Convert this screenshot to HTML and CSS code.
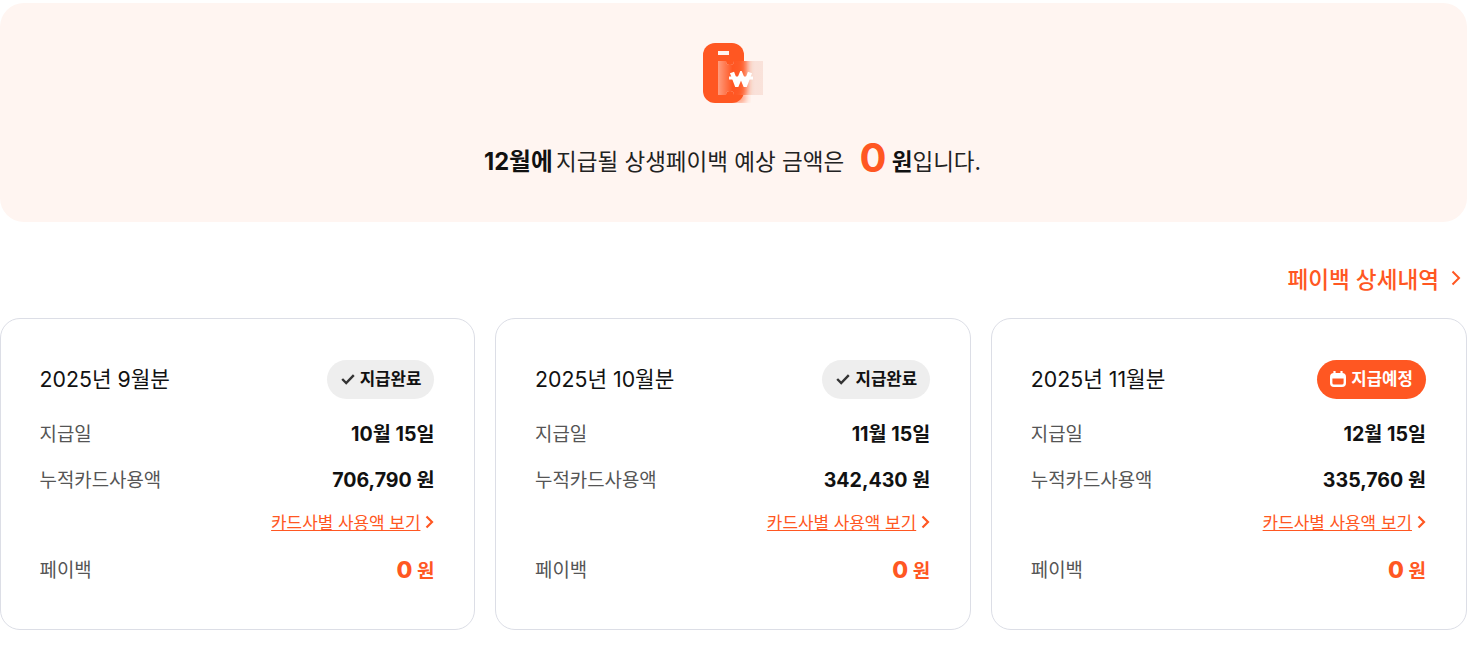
FILE: index.html
```html
<!DOCTYPE html>
<html lang="ko">
<head>
<meta charset="utf-8">
<title>페이백</title>
<link rel="stylesheet" href="styles.css">
</head>
<body>
<main class="page">
  <section class="hero">
    <svg class="hero-icon" width="60" height="60" viewBox="0 0 60 60" aria-hidden="true">
      <defs>
        <clipPath id="tk"><path d="M15 18h8a4 4 0 0 0 8 0h29v34H31a4 4 0 0 0-8 0h-8z"/></clipPath>
        <linearGradient id="sheen" x1="0" y1="0" x2="1" y2="0">
          <stop offset="0" stop-color="#fff" stop-opacity=".42"/>
          <stop offset=".32" stop-color="#fff" stop-opacity="0"/>
          <stop offset="1" stop-color="#fff" stop-opacity=".12"/>
        </linearGradient>
        <filter id="bl" x="-30%" y="-30%" width="160%" height="160%"><feGaussianBlur stdDeviation="3"/></filter>
        <filter id="soft" x="-10%" y="-10%" width="120%" height="120%"><feGaussianBlur stdDeviation=".35"/></filter>
      </defs>
      <rect x="28" y="48" width="15" height="13" rx="5" fill="#ff5722" opacity=".55" filter="url(#bl)"/>
      <rect x="0" y="0" width="41" height="60" rx="12" fill="#ff5722"/>
      <rect x="15" y="8" width="11" height="4" fill="#fff3ee"/>
      <path d="M15 18h8a4 4 0 0 0 8 0h29v34H31a4 4 0 0 0-8 0h-8z" fill="#f9ded5"/>
      <g clip-path="url(#tk)">
        <rect x="-4" y="0" width="48" height="60" rx="12" fill="#ff5722" filter="url(#bl)"/>
        <rect x="15" y="18" width="45" height="34" fill="url(#sheen)"/>
      </g>
      <g filter="url(#soft)">
        <path d="M29 29.500 33.800 42 38 32l4.200 10L47 29.500" fill="none" stroke="#fff" stroke-width="4.400"/>
        <rect x="26" y="33.500" width="24" height="3" fill="#fff"/>
      </g>
    </svg>
    <p class="hero-text"><strong class="hero-month">12월에</strong> 지급될 상생페이백 예상 금액은 <span class="hero-num">0</span> <strong>원</strong>입니다.</p>
  </section>

  <div class="detail-row">
    <a class="detail-link" href="#">페이백 상세내역
      <svg width="12" height="16" viewBox="0 0 12 16" aria-hidden="true"><path d="M2.500 1.500 9 8l-6.500 6.500" fill="none" stroke="currentColor" stroke-width="2"/></svg>
    </a>
  </div>

  <section class="cards">
    <article class="card">
      <header class="card-head">
        <h2 class="card-title">2025년 9월분</h2>
        <span class="badge done">
          <svg class="badge-icon" width="14" height="12" viewBox="0 0 14 12" aria-hidden="true"><path d="M1.200 6 5.200 10 12.800 2.200" fill="none" stroke="#333" stroke-width="2.400"/></svg><span class="badge-text">지급완료</span>
        </span>
      </header>
      <div class="row"><span class="label">지급일</span><span class="value">10월 15일</span></div>
      <div class="row"><span class="label">누적카드사용액</span><span class="value">706,790 원</span></div>
      <div class="link-row"><a class="card-link" href="#">카드사별 사용액 보기</a>
        <svg class="link-chevron" width="9" height="14" viewBox="0 0 9 14" aria-hidden="true"><path d="M1.500 1.500 7 7l-5.500 5.500" fill="none" stroke="#ff5722" stroke-width="2.200"/></svg></div>
      <div class="row pay"><span class="label">페이백</span><span class="pay-value"><b class="pay-num">0</b> 원</span></div>
    </article>

    <article class="card">
      <header class="card-head">
        <h2 class="card-title">2025년 10월분</h2>
        <span class="badge done">
          <svg class="badge-icon" width="14" height="12" viewBox="0 0 14 12" aria-hidden="true"><path d="M1.200 6 5.200 10 12.800 2.200" fill="none" stroke="#333" stroke-width="2.400"/></svg><span class="badge-text">지급완료</span>
        </span>
      </header>
      <div class="row"><span class="label">지급일</span><span class="value">11월 15일</span></div>
      <div class="row"><span class="label">누적카드사용액</span><span class="value">342,430 원</span></div>
      <div class="link-row"><a class="card-link" href="#">카드사별 사용액 보기</a>
        <svg class="link-chevron" width="9" height="14" viewBox="0 0 9 14" aria-hidden="true"><path d="M1.500 1.500 7 7l-5.500 5.500" fill="none" stroke="#ff5722" stroke-width="2.200"/></svg></div>
      <div class="row pay"><span class="label">페이백</span><span class="pay-value"><b class="pay-num">0</b> 원</span></div>
    </article>

    <article class="card">
      <header class="card-head">
        <h2 class="card-title">2025년 11월분</h2>
        <span class="badge soon">
          <svg class="badge-icon" width="16" height="16" viewBox="0 0 16 16" aria-hidden="true"><path d="M4.500 .5v3.500M11.500 .5v3.500" stroke="#fff" stroke-width="2.200" stroke-linecap="round" fill="none"/><rect x="1.200" y="3.200" width="13.600" height="11.600" rx="2.800" fill="none" stroke="#fff" stroke-width="2.400"/><rect x="1.200" y="3" width="13.600" height="4.500" fill="#fff"/></svg><span class="badge-text">지급예정</span>
        </span>
      </header>
      <div class="row"><span class="label">지급일</span><span class="value">12월 15일</span></div>
      <div class="row"><span class="label">누적카드사용액</span><span class="value">335,760 원</span></div>
      <div class="link-row"><a class="card-link" href="#">카드사별 사용액 보기</a>
        <svg class="link-chevron" width="9" height="14" viewBox="0 0 9 14" aria-hidden="true"><path d="M1.500 1.500 7 7l-5.500 5.500" fill="none" stroke="#ff5722" stroke-width="2.200"/></svg></div>
      <div class="row pay"><span class="label">페이백</span><span class="pay-value"><b class="pay-num">0</b> 원</span></div>
    </article>
  </section>
</main>
</body>
</html>
```

FILE: styles.css
```css
* { box-sizing: border-box; }
html, body { margin: 0; padding: 0; background: #fff; }
body {
  font-family: Inter, "Noto Sans CJK KR", sans-serif;
  color: #111;
  overflow: hidden;
}
.page { width: 1467px; padding-top: 3px; }
.hero {
  height: 219px;
  background: #fff5f1;
  border-radius: 24px;
  display: flex;
  flex-direction: column;
  align-items: center;
  padding-top: 40px;
}
.hero-icon { display: block; margin-left: -1px; }
.hero-text {
  margin: 35px 0 0 -2px;
  font-size: 22.5px;
  line-height: 40px;
  color: #222;
  white-space: pre-wrap;
}
.hero-text strong { font-weight: 700; color: #111; }
.hero-text .hero-month { font-size: 23.7px; margin-right: -3px; }
.hero-num {
  font-size: 40px;
  font-weight: 700;
  color: #ff5722;
  margin: 0 -1px 0 9px;
  vertical-align: -2px;
  line-height: 40px;
}
.detail-row {
  display: flex;
  justify-content: flex-end;
  padding: 40px 5px 0 0;
  height: 96px;
}
.detail-link {
  display: flex;
  align-items: center;
  gap: 11px;
  height: 32px;
  font-size: 22.6px;
  font-weight: 500;
  color: #ff5722;
  text-decoration: none;
}
.cards {
  display: grid;
  grid-template-columns: 475.45px 475.78px 475.77px;
  gap: 20px;
}
.card {
  height: 312px;
  border: 1px solid #dcdee6;
  border-radius: 20px;
  padding: 41px 40px 0 38.6px;
  background: #fff;
}
.card-head {
  display: flex;
  justify-content: space-between;
  align-items: center;
  height: 39px;
  margin-bottom: 18px;
}
.card-title { margin: 0 0 4px; font-size: 21.3px; font-weight: 400; color: #111; }
.badge {
  display: inline-flex;
  align-items: center;
  gap: 5px;
  height: 39px;
  padding: 0 13px;
  border-radius: 20px;
  font-size: 16.8px;
  font-weight: 700;
}
.badge-icon { margin-bottom: 1px; }
.badge-text { margin-bottom: 4px; }
.badge.done { background: #eeeeee; color: #111; padding-left: 14px; }
.badge.soon { background: #ff5722; color: #fff; }
.row {
  display: flex;
  justify-content: space-between;
  align-items: center;
  height: 30px;
  margin-bottom: 16px;
}
.label { font-size: 18.9px; color: #555; }
.value { font-size: 19.6px; font-weight: 700; color: #111; }
.link-row {
  display: flex;
  justify-content: flex-end;
  align-items: center;
  gap: 5px;
  height: 24px;
  margin-top: 5px;
}
.link-chevron { margin-top: 2px; }
.card-link { font-size: 16.9px; color: #ff5722; text-decoration: underline; }
.row.pay { margin-top: 20px; }
.pay-value { margin-top: 4px; font-size: 19px; font-weight: 700; color: #ff5722; }
.pay-num { font-size: 23px; font-weight: 800; }
```
